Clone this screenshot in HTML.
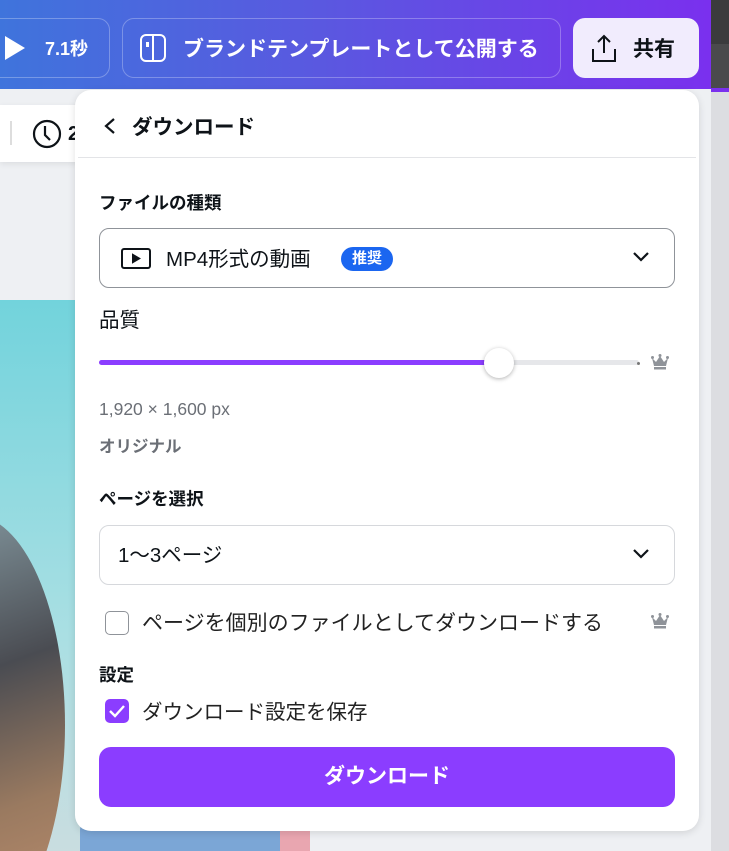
<!DOCTYPE html>
<html><head><meta charset="utf-8"><style>
*{margin:0;padding:0;box-sizing:border-box}
html,body{width:729px;height:851px;overflow:hidden}
body{position:relative;background:#eef0f3;font-family:"Liberation Sans","Noto Sans CJK JP",sans-serif;color:#0e1318}
.hdr{position:absolute;left:0;top:0;width:711px;height:89px;background:linear-gradient(90deg,#3f74dc 0%,#5a58e0 45%,#7a30ee 100%)}
.rs{position:absolute;left:711px;top:0;width:18px;height:851px;background:#dcdde1}
.rs:before{content:"";position:absolute;left:0;top:0;width:18px;height:44px;background:#3b3b3d}
.rs:after{content:"";position:absolute;left:0;top:44px;width:18px;height:44px;background:#4a4a4c;border-bottom:4px solid #7a30ee}
.btn{position:absolute;top:18px;height:60px;border:1px solid rgba(255,255,255,.28);border-radius:12px;color:#fff;font-weight:bold;font-size:21px;display:flex;align-items:center}
.tb{position:absolute;left:0;top:105px;width:80px;height:57px;background:#fff;box-shadow:0 2px 6px rgba(0,0,0,.08)}
.img{position:absolute;left:0;top:300px;width:310px;height:551px;background:linear-gradient(180deg,#72d3dc,#a9dfe3 60%,#c9dde0);overflow:hidden}
.panel{position:absolute;left:75px;top:90px;width:624px;height:741px;background:#fff;border-radius:16px;box-shadow:0 2px 8px rgba(0,0,0,.12)}
.t{position:absolute;white-space:nowrap;line-height:1.5}
.sel{position:absolute;left:24px;width:576px;height:60px;border:1px solid #8f9399;border-radius:10px}
.chev{position:absolute;right:24px;top:22px}
</style></head><body>
<div class="hdr"></div>
<div class="rs"></div>
<div class="btn" style="left:-20px;width:130px;"><svg width="26" height="26" style="margin-left:22px"><path d="M2 1 L22 13 L2 25Z" fill="#fff"/></svg><span style="margin-left:16px;font-size:18px">7.1秒</span></div>
<div class="btn" style="left:122px;width:439px;"><svg width="28" height="28" style="margin-left:16px" fill="none" stroke="#fff" stroke-width="2"><rect x="2" y="1" width="24" height="26" rx="5"/><line x1="14" y1="1" x2="14" y2="27"/><rect x="7" y="8" width="3" height="5" fill="#fff" stroke="none"/></svg><span style="margin-left:16px">ブランドテンプレートとして公開する</span></div>
<div class="btn" style="left:573px;top:18px;width:126px;background:#f1ecfd;border:none;color:#0e1318"><svg width="30" height="30" style="margin-left:16px" fill="none" stroke="#0e1318" stroke-width="2"><path d="M15 3V20M9 9L15 3L21 9M4 16V28H26V16"/></svg><span style="margin-left:14px">共有</span></div>
<div class="tb"><div style="position:absolute;left:10px;top:16px;width:2px;height:24px;background:#ddd"></div><svg width="32" height="32" style="position:absolute;left:31px;top:13px" fill="none" stroke="#0e1318" stroke-width="2.2"><circle cx="16" cy="16" r="13"/><path d="M14 8V17L19 22"/></svg><span class="t" style="left:68px;top:14px;font-size:20px;font-weight:bold">2</span></div>
<div class="img"><div style="position:absolute;left:-120px;top:215px;width:185px;height:420px;border-radius:50%;background:linear-gradient(160deg,#8aa0a8,#4a4c52 40%,#9a7a60 70%,#c09070)"></div><div style="position:absolute;left:80px;top:520px;width:200px;height:31px;background:#7ba6d6;border-radius:10px 10px 0 0"></div><div style="position:absolute;left:280px;top:530px;width:30px;height:21px;background:#e9a6b0"></div></div>
<div class="panel">
<svg width="14" height="18" style="position:absolute;left:28px;top:27px" fill="none" stroke="#0e1318" stroke-width="2.2"><path d="M11 2L3 9L11 16"/></svg>
<span class="t" style="left:57px;top:23px;font-size:20.5px;font-weight:bold">ダウンロード</span>
<div style="position:absolute;left:3px;right:3px;top:67px;height:1px;background:#e3e4e7"></div>
<span class="t" style="left:24px;top:100px;font-size:17.5px;font-weight:bold">ファイルの種類</span>
<div class="sel" style="top:138px;">
<svg width="32" height="24" style="position:absolute;left:20px;top:18px" fill="none" stroke="#0e1318" stroke-width="2"><rect x="2" y="2" width="28" height="19" rx="2"/><path d="M13 8L19 11.5L13 15Z" fill="#0e1318"/></svg>
<span class="t" style="left:66px;top:16px;font-size:20.5px">MP4形式の動画</span>
<span class="t" style="left:241px;top:18px;width:52px;height:24px;border-radius:12px;background:#1b66f0;color:#fff;font-size:15px;font-weight:bold;text-align:center;line-height:24px">推奨</span>
<svg class="chev" width="18" height="12" fill="none" stroke="#0e1318" stroke-width="2.2"><path d="M2 2L9 9L16 2"/></svg></div>
<span class="t" style="left:24px;top:216px;font-size:20.5px">品質</span>
<div style="position:absolute;left:24px;top:270px;width:540px;height:5px;background:#e6e7ea;border-radius:3px"></div>
<div style="position:absolute;left:24px;top:270px;width:400px;height:5px;background:#8b3dff;border-radius:3px"></div>
<div style="position:absolute;left:562px;top:272px;width:3px;height:3px;background:#777;border-radius:2px"></div>
<div style="position:absolute;left:409px;top:258px;width:30px;height:30px;border-radius:50%;background:#fff;box-shadow:0 1px 4px rgba(0,0,0,.3)"></div>
<svg width="18" height="16" style="position:absolute;left:576px;top:264px" fill="#8f9399"><path d="M1 4L5 8L9 2L13 8L17 4L15 12H3Z"/><circle cx="1.5" cy="3.5" r="1.5"/><circle cx="9" cy="1.5" r="1.5"/><circle cx="16.5" cy="3.5" r="1.5"/><rect x="3" y="13" width="12" height="2.5"/></svg>
<span class="t" style="left:24px;top:306px;font-size:17.5px;color:#6b6f76">1,920 × 1,600 px</span>
<span class="t" style="left:24px;top:345px;font-size:16.5px;color:#6b6f76;font-weight:bold">オリジナル</span>
<span class="t" style="left:24px;top:396px;font-size:17.5px;font-weight:bold">ページを選択</span>
<div class="sel" style="top:435px;border-color:#d6d8dc">
<span class="t" style="left:18px;top:15px;font-size:20.5px">1〜3ページ</span>
<svg class="chev" width="18" height="12" fill="none" stroke="#0e1318" stroke-width="2.2"><path d="M2 2L9 9L16 2"/></svg></div>
<div style="position:absolute;left:30px;top:521px;width:24px;height:24px;border:1.5px solid #8f9399;border-radius:5px"></div>
<span class="t" style="left:67px;top:518px;font-size:21px;color:#222">ページを個別のファイルとしてダウンロードする</span>
<svg width="18" height="16" style="position:absolute;left:576px;top:523px" fill="#8f9399"><path d="M1 4L5 8L9 2L13 8L17 4L15 12H3Z"/><circle cx="1.5" cy="3.5" r="1.5"/><circle cx="9" cy="1.5" r="1.5"/><circle cx="16.5" cy="3.5" r="1.5"/><rect x="3" y="13" width="12" height="2.5"/></svg>
<span class="t" style="left:24px;top:572px;font-size:17.5px;font-weight:bold">設定</span>
<div style="position:absolute;left:30px;top:609px;width:24px;height:24px;background:#8b3dff;border-radius:5px"><svg width="24" height="24" fill="none" stroke="#fff" stroke-width="2.4"><path d="M5 12L10 17L19 7"/></svg></div>
<span class="t" style="left:67px;top:608px;font-size:20.5px;color:#222">ダウンロード設定を保存</span>
<div style="position:absolute;left:24px;top:657px;width:576px;height:60px;background:#8b3dff;border-radius:12px;color:#fff;font-size:21px;font-weight:bold;text-align:center;line-height:60px">ダウンロード</div>
</div>
</body></html>
